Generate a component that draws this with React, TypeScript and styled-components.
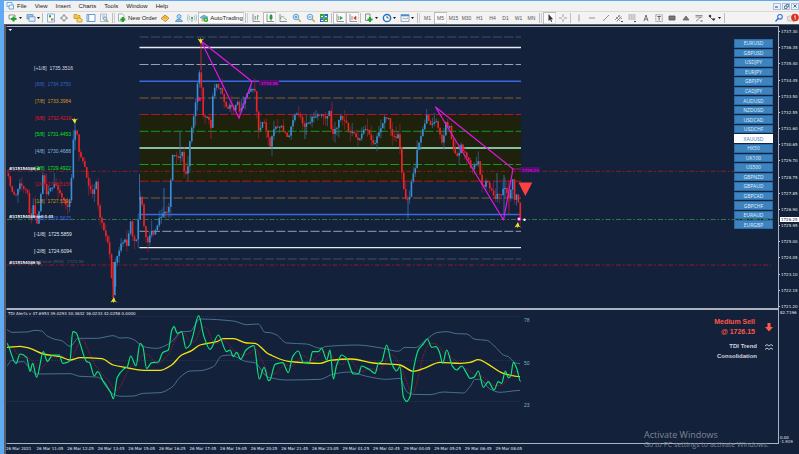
import React from "react";
import styled, { createGlobalStyle } from "styled-components";

const Global = createGlobalStyle`
  * { box-sizing: border-box; }
  html, body, #root { height: 100%; margin: 0; }
  body { background: #14213b; overflow: hidden; font-family: "Liberation Sans", Arial, sans-serif; }
  button { font: inherit; border: 0; margin: 0; padding: 0; background: none; color: inherit; cursor: pointer; }
`;

const TINY = `"DejaVu Sans", Tahoma, sans-serif`;

const Window = styled.div`
  display: flex;
  flex-direction: column;
  min-height: 100vh;
  border-left: 4px solid #5faaf2;
  border-top: 1px solid #5faaf2;
`;

const MenuBar = styled.nav`
  display: flex;
  align-items: center;
  height: 10px;
  padding: 0 0 0 2px;
  gap: 3px;
  background: #f1f1f1;
  color: #222;
  font-size: 6px;
  line-height: 10px;
`;

const MenuList = styled.div`
  display: flex;
  gap: 8px;
`;

const MenuItem = styled.button`
  line-height: 10px;
`;

const WindowControls = styled.div`
  display: flex;
  gap: 1px;
  margin-left: auto;
`;

const WindowButton = styled.button`
  display: flex;
  align-items: center;
  justify-content: center;
  width: 8px;
  height: 7px;
  border: 1px solid #a9c0dc;
  background: #eaf3fc;
`;

const Toolbar = styled.div`
  display: flex;
  align-items: center;
  height: 13px;
  padding: 0 0 0 2px;
  background: #f3f3f3;
  border-top: 1px solid #d9d9d9;
  color: #1c1c1c;
  font-size: 6px;
`;

const Tool = styled.button<{ $w?: number; $active?: boolean }>`
  display: flex;
  align-items: center;
  justify-content: center;
  gap: 1px;
  flex: none;
  width: ${(p) => p.$w ?? 13}px;
  height: 12px;
  white-space: nowrap;
  background: ${(p) => (p.$active ? "#fafafa" : "transparent")};
  box-shadow: ${(p) => (p.$active ? "inset 1px 1px 0 #bcbcbc, inset -1px -1px 0 #dedede" : "none")};
`;

const Period = styled(Tool)`
  font-size: 5px;
  color: #555;
`;

const Separator = styled.span<{ $grip?: boolean }>`
  flex: none;
  width: ${(p) => (p.$grip ? 3 : 1)}px;
  height: 10px;
  margin: 0 1px;
  border-left: 1px solid #bdbdbd;
  border-right: ${(p) => (p.$grip ? "1px solid #cfcfcf" : "0")};
`;

const ToolbarEnd = styled.div`
  display: flex;
  margin-left: auto;
`;

const Workspace = styled.main`
  flex: 1;
  display: flex;
  flex-direction: column;
  min-height: 0;
  padding-top: 1px;
  border-left: 2px solid #5b6068;
  border-top: 1px solid #5b6068;
  background: #14213b;
`;

const Panel = styled.section<{ $grow: number }>`
  position: relative;
  display: flex;
  flex: ${(p) => p.$grow} 1 0;
  min-height: 0;
`;

const Plot = styled.div`
  position: relative;
  flex: 1;
  min-width: 0;
  overflow: hidden;
  border: 1px solid #aab3bf;
  border-left-color: #14213b;
`;

const Canvas = styled.svg`
  position: absolute;
  inset: 0;
  display: block;
  width: 100%;
  height: 100%;
  text { font-family: ${TINY}; font-size: 4px; white-space: pre; }
  text.level { font-family: "Liberation Sans", Arial, sans-serif; font-size: 5px; }
`;

const Axis = styled.div`
  position: relative;
  display: flex;
  flex-direction: column;
  justify-content: space-between;
  flex: none;
  width: 20px;
  padding: 3px 0 0 2px;
  color: #e6ebf3;
  font: 4px/5px ${TINY};
`;

const Tick = styled.span`
  position: relative;
  white-space: nowrap;
  &::before {
    content: "";
    position: absolute;
    left: -2px;
    top: 2px;
    width: 1px;
    height: 1px;
    background: #c5ccd6;
  }
`;

const PriceTag = styled.span`
  position: absolute;
  left: 1px;
  top: 191px;
  width: 19px;
  padding-left: 1px;
  background: #fff;
  color: #14213b;
`;

const TimeAxis = styled.div`
  display: grid;
  grid-template-columns: repeat(17, 1fr);
  width: 520px;
  max-width: 100%;
  height: 10px;
  padding-top: 2px;
  color: #e6ebf3;
  font: 4px/5px ${TINY};
  white-space: nowrap;
`;

const PairList = styled.div`
  position: absolute;
  top: 12px;
  right: 5px;
  display: flex;
  flex-direction: column;
  gap: 1px;
  width: 39px;
  height: 190px;
`;

const Pair = styled.button<{ $selected: boolean }>`
  flex: 1;
  min-height: 0;
  border: 1px solid ${(p) => (p.$selected ? "#ffffff" : "#2d6ba5")};
  background: ${(p) => (p.$selected ? "#ffffff" : "#3d83bf")};
  color: ${(p) => (p.$selected ? "#3d83bf" : "#dbeaf7")};
  font: 5px/6px "Noto Sans", sans-serif;
`;

const Signals = styled.div`
  position: absolute;
  top: 7px;
  right: 4px;
  display: grid;
  grid-template-columns: auto 10px;
  align-items: center;
  column-gap: 7px;
  row-gap: 4px;
  font: bold 6px/10px "Liberation Sans", Arial, sans-serif;
`;

const Signal = styled.div<{ $sell?: boolean }>`
  text-align: right;
  padding-right: ${(p) => (p.$sell ? 2 : 0)}px;
  font-size: ${(p) => (p.$sell ? 7 : 6)}px;
  color: ${(p) => (p.$sell ? "#ff5548" : "#d0d5dc")};
`;

const Watermark = styled.div`
  position: absolute;
  right: 30px;
  bottom: -5px;
  width: 125px;
  color: #7c8694;
  font: 9px/11px "Open Sans", sans-serif;
  white-space: nowrap;
  pointer-events: none;
`;

const WatermarkLine = styled.div`
  font-size: 7px;
  line-height: 9px;
`;

const IndicatorAxis = styled(Axis)`
  padding: 1px 0 0 1px;
`;

const StackedTicks = styled.div`
  display: flex;
  flex-direction: column;
  line-height: 4px;
`;

type Pt = [number, number];

const closes: Pt[] = [
  [6,170],[10,184],[15,199],[19,184],[24,188],[28,192],[30,222],[33,205],[37,223],[40,205],[43,172],[46,195],[50,190],[54,182],[58,190],[62,200],[68,208],[71,190],[73,140],[75,131],[77,132],[79,150],[84,165],[88,182],[93,198],[96,178],[99,218],[103,225],[107,240],[110,257],[113,297],[115,262],[119,250],[124,238],[127,245],[131,220],[133,240],[137,242],[139,205],[141,192],[144,228],[147,245],[151,230],[154,238],[157,225],[161,215],[165,212],[168,215],[171,178],[173,151],[178,158],[182,152],[185,180],[188,167],[190,137],[195,107],[198,77],[200,67],[201,85],[203,115],[207,118],[211,126],[213,92],[217,83],[222,93],[227,108],[230,103],[235,110],[238,98],[240,113],[245,96],[252,85],[255,92],[259,137],[263,117],[267,135],[270,147],[274,128],[278,126],[283,128],[287,140],[292,125],[296,113],[300,115],[303,127],[308,125],[313,115],[318,116],[322,112],[327,118],[329,108],[332,135],[337,125],[341,117],[345,120],[350,133],[355,135],[357,142],[362,132],[367,130],[370,138],[375,143],[380,132],[385,117],[388,115],[391,132],[395,138],[399,135],[402,173],[404,193],[407,200],[409,198],[413,173],[415,170],[417,150],[420,137],[425,123],[427,115],[430,127],[435,120],[440,133],[443,148],[445,123],[450,128],[452,145],[457,157],[461,145],[467,158],[472,170],[478,162],[483,187],[487,180],[492,192],[495,200],[498,193],[502,198],[504,183],[508,200],[513,178],[515,203],[517,192],[520,219],
];

function at(points: Pt[], x: number): number {
  if (x <= points[0][0]) return points[0][1];
  for (let i = 1; i < points.length; i++) {
    const [x1, y1] = points[i];
    const [x0, y0] = points[i - 1];
    if (x <= x1) return y0 + ((y1 - y0) * (x - x0)) / (x1 - x0);
  }
  return points[points.length - 1][1];
}

const noise = (n: number) => {
  const v = Math.sin(n * 91.7 + 3.1) * 43758.5;
  return v - Math.floor(v);
};

const BAR = 1.91;
const candles = Array.from({ length: 270 }, (_, i) => {
  const x = 6.5 + i * BAR;
  const shake = (k: number) => (noise(k) - 0.5) * 5;
  const open = at(closes, x - BAR) + shake(i);
  const close = at(closes, x) + shake(i + 1);
  const top = Math.min(open, close);
  const bottom = Math.max(open, close);
  return {
    x,
    top,
    body: Math.max(1.2, bottom - top),
    high: top - noise(i + 500) ** 2 * 11,
    low: bottom + noise(i + 900) ** 2 * 10,
    up: close < open,
  };
});

const spikes: [number, number, number, string][] = [
  [201, 42, 70, "#e02a2a"], [332, 102, 132, "#b02038"], [180, 132, 155, "#3d78ad"], [139.5, 174, 200, "#3d78ad"],
  [408, 200, 218, "#3d78ad"], [497, 173, 196, "#3d78ad"], [504, 175, 214, "#3d78ad"], [75, 124, 150, "#3d78ad"],
  [509, 180, 214, "#b02038"], [211, 124, 139, "#b02038"], [305, 124, 139, "#3d78ad"], [164, 188, 218, "#3d78ad"],
];

const levels: { y: number; color: string; w: number; dashed?: boolean }[] = [
  { y: 37, color: "#414e5f", w: 1, dashed: true },
  { y: 47.5, color: "#e6ebf2", w: 1.3 },
  { y: 64.5, color: "#98a2b0", w: 1, dashed: true },
  { y: 81.2, color: "#3b68e0", w: 1.5 },
  { y: 98, color: "#846022", w: 1.2, dashed: true },
  { y: 114.5, color: "#b5122f", w: 1, dashed: true },
  { y: 131.3, color: "#159a1c", w: 1, dashed: true },
  { y: 148, color: "#84bda4", w: 1.8 },
  { y: 164.5, color: "#159a1c", w: 1, dashed: true },
  { y: 181.2, color: "#b01818", w: 1, dashed: true },
  { y: 198, color: "#846022", w: 1.2, dashed: true },
  { y: 214.5, color: "#3b68e0", w: 1.5 },
  { y: 231.3, color: "#98a2b0", w: 1, dashed: true },
  { y: 247.6, color: "#e6ebf2", w: 1.4 },
  { y: 259, color: "#414e5f", w: 1, dashed: true },
];

const levelLabels: [string, string, number, string][] = [
  ["[+1/8]", "1735.3516", 70, "#d5dae2"],
  ["[8/8]", "1734.3750", 86, "#3861c4"],
  ["[7/8]", "1733.3984", 103, "#d2951d"],
  ["[6/8]", "1732.4219", 120, "#e01427"],
  ["[5/8]", "1731.4453", 136, "#0be01b"],
  ["[4/8]", "1730.4688", 153, "#86b8dc"],
  ["[3/8]", "1729.4922", 170, "#0be01b"],
  ["[2/8]", "1728.5156", 186, "#c5182a"],
  ["[1/8]", "1727.5391", 203, "#d2951d"],
  ["[0/8]", "1726.5625", 220, "#3f66e0"],
  ["[-1/8]", "1725.5859", 236, "#e0e4ea"],
  ["[-2/8]", "1724.6094", 253, "#e0e4ea"],
];

const pairs = ["EURUSD","GBPUSD","USDJPY","EURJPY","GBPJPY","CADJPY","AUDUSD","NZDUSD","USDCAD","USDCHF","XAUUSD","HK50","UK100","US500","GBPNZD","GBPAUD","GBPCAD","GBPCHF","EURAUD","EURGBP"];
const prices = ["1737.30","1736.35","1735.40","1734.45","1733.50","1732.55","1731.60","1730.65","1729.70","1728.75","1727.85","1726.90","1725.95","1725.00","1724.05","1723.10","1722.15","1721.20"];
const times = ["26 Mar 2021","26 Mar 11:05","26 Mar 12:25","26 Mar 13:45","26 Mar 15:05","26 Mar 16:25","26 Mar 17:45","26 Mar 19:05","26 Mar 20:25","26 Mar 21:45","26 Mar 23:05","29 Mar 01:25","29 Mar 02:45","29 Mar 04:05","29 Mar 05:25","29 Mar 06:45","29 Mar 08:05"];

const third = (dx: number, pts: Pt[]): Pt[] => pts.map(([x, y]) => [dx + x / 3, 300 + y / 3]);
const upper = [
  ...third(0, [[18,88],[35,97],[80,96],[105,91],[125,93],[140,107],[165,118],[185,122],[210,139],[235,115],[290,115],[340,107],[360,114],[380,113],[400,118],[430,140],[470,145],[500,135],[520,120],[545,95],[570,94],[600,57],[700,63],[740,74],[775,72],[795,97]]),
  ...third(270, [[0,98],[20,105],[50,129],[110,132],[150,145],[170,139],[260,135],[340,145],[385,154],[405,142],[435,143],[470,118],[500,98],[530,95],[560,101],[590,102],[615,118],[650,121],[680,145],[700,165],[715,170],[735,188],[750,191]]),
];
const lower = [
  ...third(0, [[18,200],[35,181],[50,186],[70,185],[85,200],[110,222],[210,221],[240,229],[290,231],[310,242],[340,283],[365,289],[400,288],[430,280],[480,278],[515,262],[540,232],[570,213],[600,212],[640,200],[665,168],[690,165],[740,185],[765,188],[795,225]]),
  ...third(270, [[0,233],[50,240],[150,238],[190,222],[240,216],[290,229],[350,238],[390,235],[410,275],[430,283],[480,284],[520,276],[580,279],[600,260],[615,238],[630,238],[660,267],[690,277],[720,274],[750,271]]),
];
const middle = [
  ...third(0, [[18,142],[60,139],[90,145],[130,162],[180,170],[210,180],[240,173],[305,176],[340,195],[380,203],[430,211],[480,211],[515,195],[545,165],[575,152],[600,135],[650,125],[670,116],[700,116],[740,129],[765,130],[800,158]]),
  ...third(270, [[0,164],[55,184],[150,190],[180,181],[245,177],[310,189],[390,195],[430,214],[460,206],[510,187],[570,190],[600,187],[625,179],[650,190],[700,220],[750,230]]),
];
const rsi = [
  ...third(0, [[18,128],[48,191],[60,162],[80,172],[90,214],[98,190],[110,232],[130,155],[142,184],[158,165],[178,165],[188,190],[200,188],[210,182],[218,95],[228,98],[240,130],[260,185],[268,187],[283,228],[293,215],[310,245],[333,280],[340,296],[352,232],[370,208],[382,200],[392,168],[408,198],[420,130],[428,138],[440,206],[455,188],[475,186],[488,158],[505,150],[515,92],[522,80],[532,100],[545,95],[558,145],[570,135],[578,110],[596,47],[612,110],[630,148],[655,105],[680,155],[690,150],[700,170],[710,157],[722,178],[738,150],[762,137],[778,237],[792,202],[806,242]]),
  ...third(270, [[0,240],[15,193],[38,188],[55,218],[68,170],[85,153],[100,187],[118,187],[128,155],[145,155],[155,145],[170,180],[180,150],[190,237],[200,195],[215,165],[230,175],[250,222],[265,222],[275,198],[287,203],[300,210],[315,220],[325,190],[335,185],[350,135],[365,190],[380,213],[390,200],[400,290],[410,304],[420,290],[432,200],[445,150],[460,132],[472,117],[485,142],[498,140],[508,155],[518,190],[530,150],[548,200],[560,210],[575,198],[590,220],[600,235],[612,232],[625,213],[640,262],[655,245],[672,270],[685,245],[695,250],[706,213],[715,233],[722,228],[730,187],[740,205],[752,245]]),
];
const signal: Pt[] = Array.from({ length: 254 }, (_, i) => {
  const x = 12 + i * 2;
  let sum = 0;
  for (let k = 0; k < 12; k++) sum += at(rsi, x - k);
  return [x, sum / 12];
});

// Smooth curve with horizontal-friendly control points, so peaks never overshoot.
const curve = (pts: Pt[]) => {
  const slope = (i: number) => {
    if (i <= 0 || i >= pts.length - 1) return 0;
    const a = (pts[i][1] - pts[i - 1][1]) / (pts[i][0] - pts[i - 1][0]);
    const b = (pts[i + 1][1] - pts[i][1]) / (pts[i + 1][0] - pts[i][0]);
    return a * b <= 0 ? 0 : (2 * a * b) / (a + b);
  };
  return pts.reduce((d, [x, y], i) => {
    if (i === 0) return `M${x} ${y}`;
    const [px, py] = pts[i - 1];
    const h = (x - px) / 3;
    return `${d}C${px + h} ${py + slope(i - 1) * h} ${x - h} ${y - slope(i) * h} ${x} ${y}`;
  }, "");
};

const Icon = ({ children, w = 10 }: { children: React.ReactNode; w?: number }) => (
  <svg width={w} height="10" viewBox={`0 0 ${w} 10`} fill="none" stroke="#777" strokeWidth="0.8" aria-hidden="true">{children}</svg>
);
const Caret = () => (
  <svg width="3" height="2" viewBox="0 0 3 2" aria-hidden="true"><path d="M0 0h3L1.5 2z" fill="#111" /></svg>
);

const icons: Record<string, React.ReactNode> = {
  newChart: <><path d="M1 2h6v4H1z" fill="#fff" /><path d="M5.5 3.5v5M3 6h5.5" stroke="#1ba32a" strokeWidth="2.2" /></>,
  profiles: <><path d="M1 1.5h6v4.5H1z" fill="#9cc4ea" stroke="#6a93bb" /><path d="M3 3.8h6v4.5H3z" fill="#e2eefa" stroke="#6a93bb" /></>,
  market: <><path d="M1.5 1h7v8h-7z" fill="#f5f9fd" stroke="#6aa2d8" /><path d="M3 3.2h2" stroke="#1ba32a" strokeWidth="2" /><path d="M5 6.5h2.5" stroke="#e8672a" strokeWidth="2" /></>,
  navigator: <><circle cx="5" cy="5" r="2.4" stroke="#888" /><path d="M5 1v2.4M5 6.6V9M1 5h2.4M6.6 5H9" stroke="#777" /></>,
  folder: <><path d="M1 1.5h3l1 1h2v3H1z" fill="#f3c645" stroke="#c4952a" /><path d="M4 5h3l1 1h1v3H4z" fill="#f7d873" stroke="#c4952a" /></>,
  terminal: <><path d="M1 1.5h8v7H1z" fill="#fff" stroke="#4383c4" /><path d="M2.5 2v6" stroke="#7fb1e3" strokeWidth="1.6" /></>,
  tester: <><path d="M1.5 1h6v7.5h-6z" fill="#f4f8fb" stroke="#9bacbc" /><path d="M3 3h3M3 5h2" stroke="#6fa3cc" /><circle cx="6.2" cy="5.7" r="1.7" fill="#cfe5f7" stroke="#6d8ba6" /><path d="m7.4 7 1.8 2" stroke="#c69c38" strokeWidth="1.2" /></>,
  order: <><path d="M1.5 1h4l1.5 1.5V8H1.5z" fill="#fff" stroke="#8c9aa6" /><path d="M5.8 4v5M3.3 6.5h5" stroke="#1ba32a" strokeWidth="2.2" /></>,
  gold: <><path d="m5 2 4 3.2L5.5 8.5 1 5.5z" fill="#f0b23a" stroke="#b97a16" /><path d="m2 5.4 3.2 2 3-2.4" stroke="#fbe3a2" /></>,
  person: <><circle cx="5" cy="3.5" r="2" fill="#b4d7f2" stroke="#4b92cb" /><path d="M1.5 8.5c.5-3 6.5-3 7 0z" fill="#84bce7" stroke="#4b92cb" /></>,
  radio: <><circle cx="5" cy="5" r="1.2" fill="#5ea970" stroke="none" /><path d="M3 2.8a3 3 0 0 0 0 4.4M7 2.8a3 3 0 0 1 0 4.4M1.6 1.5a5 5 0 0 0 0 7M8.4 1.5a5 5 0 0 1 0 7" stroke="#8cb3bd" /><path d="M5 6v3" stroke="#57a06b" /></>,
  auto: <><path d="M1 4.5 5 2l4 2.2-4 2z" fill="#6eb1e0" stroke="#4486b5" strokeWidth=".5" /><path d="M2 6h4v2.5H3z" fill="#e9bb48" stroke="none" /><circle cx="7" cy="6.7" r="2.2" fill="#25a738" stroke="none" /><path d="m6.3 5.6 1.8 1.1-1.8 1.1z" fill="#fff" stroke="none" /></>,
  bars: <path d="M2 1v7.5h7M4.2 3v4M6.6 2v5M4.2 4h1M6.6 3h1" stroke="#6f7f76" />,
  candle: <><path d="M2 1v7.5h7M6 1v7" stroke="#63786b" /><path d="M5 2.5h2v3.5H5z" fill="#26b13a" stroke="#1a8a2a" /></>,
  lineChart: <><path d="M2 1v7.5h7" stroke="#777" /><path d="M2.5 6c1-5 3-2 6 1" stroke="#55a066" /></>,
  zoomIn: <><circle cx="4" cy="4" r="2.8" fill="#dff0fc" stroke="#3e8dca" /><path d="M2.6 4h2.8M4 2.6v2.8" stroke="#2678bb" /><path d="m6.2 6.2 2.6 2.6" stroke="#d0a233" strokeWidth="1.5" /></>,
  zoomOut: <><circle cx="4" cy="4" r="2.8" fill="#dff0fc" stroke="#3e8dca" /><path d="M2.6 4h2.8" stroke="#2678bb" /><path d="m6.2 6.2 2.6 2.6" stroke="#d0a233" strokeWidth="1.5" /></>,
  tile: <g stroke="none"><path d="M1 1h4v4H1zM5 5h4v4H5z" fill="#31a63a" /><path d="M5.3 1H9v3.7H5.3zM1 5.3h3.7V9H1z" fill="#2c64bd" /><path d="M2 3h2v1H2zM6 3h2v1H6zM2 7h2v1H2zM6 7h2v1H6z" fill="#fff" /></g>,
  scroll: <><path d="M2 1v7.5h7M3.8 3v4" stroke="#777" /><path d="m5 3 3 2-3 2z" fill="#26a63a" stroke="none" /></>,
  shift: <><path d="M2 1v7.5h7M4 3v4" stroke="#777" /><path d="M8 3 5.5 5 8 7zM8 5h1.5" fill="#d53b2b" stroke="#d53b2b" strokeWidth=".4" /></>,
  indicators: <><path d="M1.5 1H6v6.5H1.5z" fill="#f2f2f2" stroke="#777" /><path d="M6 4v5M3.5 6.5h5" stroke="#1ba32a" strokeWidth="2" /></>,
  clock: <><circle cx="5" cy="5" r="3.6" fill="#fff" stroke="#2372c4" strokeWidth="1.5" /><path d="M5 3v2h1.7" stroke="#333" /></>,
  template: <><path d="M1 1.5h8v7H1z" fill="#f5faff" stroke="#6a9cca" /><path d="M1 2.5h8" stroke="#4b8bc8" strokeWidth="1.6" /><path d="m2.5 6 1.5-1 1.5 1L8 5" stroke="#cc7a5a" /></>,
  cursor: <path d="M3.5 1v7l1.6-1.5L6.3 9l.9-.5L6.1 6.2h2z" fill="#333" stroke="none" />,
  cross: <path d="M5 1v3M5 6v3M1 5h3M6 5h3" stroke="#888" />,
  vline: <path d="M5 1.5v7" stroke="#888" />,
  hline: <path d="M2 5h6" stroke="#777" />,
  trend: <path d="m2 8 6-6" stroke="#777" />,
  channel: <><path d="m1 7 5-5M2.5 8.5l5-5M2 4l4 4M4 2.5 8 6" /><path d="M7 8.5h2" stroke="#222" /></>,
  fibo: <><path d="M1.5 2h7M1.5 4h7M1.5 6h7" strokeDasharray="1.5 .4" /><path d="M7 8.5h2" stroke="#222" /></>,
  text: <path d="M3 8.2 5 2l2 6.2M3.7 6.2h2.6" stroke="#555" />,
  label: <><path d="M1.8 1.8h6.5v6.7H1.8z" strokeDasharray="1 .6" /><path d="M3.4 3.5h3.4M5.1 3.5v4" stroke="#444" /></>,
  rect: <path d="M2 3h6v4H2z" fill="#777" stroke="#555" />,
  tri: <path d="M2 7h6L5 3z" fill="#777" stroke="#666" />,
  andrews: <><path d="M1.5 2.5h7M1.5 4h7M2 8l5-4" /><path d="M6.5 8h2" stroke="#222" /></>,
  arrows: <><path d="M1.5 3 3 1.5 4.5 3 3 4.5zM5 5.5h3.5L6.7 8z" fill="#222" stroke="none" /><path d="m3 4 3 3" stroke="#444" /></>,
  search: <><circle cx="6" cy="3.8" r="2.3" stroke="#3972d2" strokeWidth="1.1" /><path d="M4.2 5.5 1.5 8.5" stroke="#3972d2" strokeWidth="1.4" /></>,
};

const Btn = ({ icon, label, w, active, caret, children }: { icon: string; label: string; w?: number; active?: boolean; caret?: boolean; children?: React.ReactNode }) => (
  <Tool $w={w} $active={active} aria-label={label} title={label}>
    <Icon>{icons[icon]}</Icon>
    {children}
    {caret && <Caret />}
  </Tool>
);

const Arrow = ({ x, y, down }: { x: number; y: number; down?: boolean }) => (
  <path transform={`translate(${x} ${y}) scale(1 ${down ? -1 : 1})`} d="M0-3 1.4 1 3.6 2.6.4 1.6-.3 3.2-.9 1.5-3.4 2.6z" fill="#f2e52b" />
);

const PriceChart = () => (
  <Canvas role="img" aria-label="XAUUSD M5 price chart">
    <g transform="translate(-7 -27)">
      <path d="M8.5 29h3.5l-1.7 2z" fill="#fff" />
      <rect x="140" y="114.5" width="381" height="66.7" fill="#1e220d" />
      {levels.map((l) => (
        <line key={l.y} x1="139.5" x2="521" y1={l.y} y2={l.y} stroke={l.color} strokeWidth={l.w} strokeDasharray={l.dashed ? "9 2.4" : undefined} />
      ))}
      <g strokeWidth=".9" strokeDasharray="5 2 1.5 2">
        <line x1="7" x2="100%" y1="171.3" y2="171.3" stroke="#9c1a24" />
        <line x1="7" x2="100%" y1="219.5" y2="219.5" stroke="#2c8446" />
        <line x1="7" x2="100%" y1="265" y2="265" stroke="#9c1a24" />
      </g>
      {spikes.map(([x, y1, y2, c]) => <line key={x} x1={x} x2={x} y1={y1} y2={y2} stroke={c} strokeWidth=".8" />)}
      {candles.map((c) => (
        <g key={c.x}>
          <line x1={c.x} x2={c.x} y1={c.high} y2={c.low} stroke={c.up ? "#356c9f" : "#9a2136"} strokeWidth=".7" />
          <rect x={c.x - 0.8} y={c.top} width="1.6" height={c.body} fill={c.up ? "#3b8fd4" : "#f42222"} />
        </g>
      ))}
      <rect x="112.5" y="262" width="1.5" height="36" fill="#d02a30" />
      <rect x="114" y="262" width="1.5" height="33" fill="#3b8fd4" />
      {levelLabels.map(([k, v, y, c]) => <text className="level" key={k} x={k.length > 5 ? 34 : 35} y={y} fill={c}>{`${k}  ${v}`}</text>)}
      <text x="39" y="262.5" fill="#4b5767">Frame (M48)  1723.98</text>
      <g fill="#f3f5f8" stroke="#f3f5f8" strokeWidth=".15">
        <text x="9" y="170">#315154086 sl</text>
        <text x="9" y="218">#315154086 sell 0.01</text>
        <text x="9" y="264">#315154086 tp</text>
      </g>
      <g fill="none" stroke="#e416e4" strokeWidth="1.2" strokeLinejoin="round">
        <path d="M201 41 239 118 252 81.5zM435.5 107 513 169l-9.5 51z" />
        <path d="M252 81.5h8M513 169h8" strokeWidth=".6" />
      </g>
      <g fill="#530e6b">
        <rect x="259" y="80" width="20" height="5.5" />
        <rect x="520" y="167" width="20" height="5.5" />
      </g>
      <g fill="#e01ae0">
        <text x="261" y="84.5">1734.38</text>
        <text x="522" y="171.5">1729.23</text>
      </g>
      <path d="m199 96 .7 2.1 2.3-.3-1.6 1.5 1 2-2-.8-1.9 1.1.6-2.2-1.8-1.3 2.2-.1z" fill="#f01882" />
      <path d="M518.5 182.5h13.8l-7 13.5z" fill="#ff4040" />
      <Arrow x={75} y={121} down />
      <Arrow x={201} y={41} down />
      <Arrow x={114} y={300} />
      <Arrow x={518} y={225} />
      <circle cx="519" cy="219" r="1.5" fill="#fff" stroke="#f01ad0" />
      <circle cx="524.5" cy="219.7" r="1.2" fill="#fff" />
    </g>
  </Canvas>
);

const TdiChart = () => (
  <Canvas role="img" aria-label="TDI indicator chart">
    <g transform="translate(-7 -310)" fill="none" strokeLinejoin="round">
      <path d="M7 316.5H521M7 360.5H521M7 401.5H521" stroke="#324157" strokeWidth=".6" strokeDasharray="1 1" />
      <path d={curve(upper)} stroke="#4e7897" strokeWidth=".9" />
      <path d={curve(lower)} stroke="#4e7897" strokeWidth=".9" />
      <path d={curve(signal)} stroke="#c3192c" strokeWidth=".7" strokeDasharray="1.5 1" />
      <path d={curve(middle)} stroke="#f4e60c" strokeWidth="1.3" />
      <path d={curve(rsi)} stroke="#0ee07c" strokeWidth="1.2" />
      <text x="8" y="315" fill="#e6ebf3">TDI Alerts v 47.6953 39.0293 30.3632 36.0233 42.0258 0.0000</text>
      <g fill="#77b5b5">
        <text className="level" x="524" y="322">78</text>
        <text className="level" x="524" y="365">50</text>
        <text className="level" x="524" y="407">23</text>
      </g>
    </g>
  </Canvas>
);

export default function App() {
  return (
    <Window>
      <Global />
      <MenuBar aria-label="Main menu">
        <Icon w={8}><path d="M1 1.5h5v4H1z" fill="#fff" stroke="#5c97d3" /><path d="M3 4h4.5v4H3z" fill="#e9f3fd" stroke="#5c97d3" /></Icon>
        <MenuList>
          {["File", "View", "Insert", "Charts", "Tools", "Window", "Help"].map((m) => <MenuItem key={m}>{m}</MenuItem>)}
        </MenuList>
        <WindowControls>
          <WindowButton aria-label="Minimize"><svg width="4" height="4"><path d="M0 3h3" stroke="#345" /></svg></WindowButton>
          <WindowButton aria-label="Restore"><svg width="5" height="5" fill="none" stroke="#457" strokeWidth=".7"><path d="M.5 2h2.500v2.500H.5zM2 2V.5h2.500V3H3" /></svg></WindowButton>
          <WindowButton aria-label="Close"><svg width="4" height="4"><path d="m.5.5 3 3m0-3-3 3" stroke="#345" strokeWidth=".8" /></svg></WindowButton>
        </WindowControls>
      </MenuBar>
      <Toolbar role="toolbar">
        <Btn icon="newChart" label="New chart" w={18} caret />
        <Btn icon="profiles" label="Profiles" w={17} caret />
        <Separator />
        <Btn icon="market" label="Market watch" />
        <Btn icon="navigator" label="Data window" w={14} />
        <Btn icon="folder" label="Navigator" />
        <Btn icon="terminal" label="Terminal" />
        <Btn icon="tester" label="Strategy tester" w={14} />
        <Separator $grip />
        <Btn icon="order" label="New Order" w={42}>New Order</Btn>
        <Btn icon="gold" label="MetaEditor" w={14} />
        <Btn icon="person" label="Community" />
        <Btn icon="radio" label="Signals" />
        <Btn icon="auto" label="AutoTrading" w={46} active>AutoTrading</Btn>
        <Separator $grip />
        <Btn icon="bars" label="Bar chart" w={14} />
        <Btn icon="candle" label="Candlesticks" active />
        <Btn icon="lineChart" label="Line chart" w={14} />
        <Btn icon="zoomIn" label="Zoom in" w={14} />
        <Btn icon="zoomOut" label="Zoom out" />
        <Btn icon="tile" label="Tile windows" />
        <Separator />
        <Btn icon="scroll" label="Auto scroll" active />
        <Btn icon="shift" label="Chart shift" active />
        <Separator />
        <Btn icon="indicators" label="Indicators" w={18} caret />
        <Btn icon="clock" label="Periods" w={18} caret />
        <Btn icon="template" label="Templates" w={18} caret />
        <Separator $grip />
        {["M1", "M5", "M15", "M30", "H1", "H4", "D1", "W1", "MN"].map((p) => <Period key={p} $active={p === "M5"}>{p}</Period>)}
        <Separator $grip />
        <Btn icon="cursor" label="Cursor" active />
        <Btn icon="cross" label="Crosshair" />
        <Separator />
        <Btn icon="vline" label="Vertical line" />
        <Btn icon="hline" label="Horizontal line" w={14} />
        <Btn icon="trend" label="Trendline" />
        <Btn icon="channel" label="Channel" />
        <Btn icon="fibo" label="Fibonacci" w={14} />
        <Btn icon="text" label="Text" />
        <Btn icon="label" label="Text label" />
        <Btn icon="rect" label="Rectangle" w={14} />
        <Btn icon="tri" label="Triangle" />
        <Btn icon="andrews" label="Pitchfork" />
        <Btn icon="arrows" label="Arrows" w={18} caret />
        <Separator />
        <ToolbarEnd>
          <Btn icon="search" label="Search" w={12} />
          <Tool $w={14} aria-label="Notifications, 1 new">
            <svg width="13" height="11" viewBox="0 0 13 11" aria-hidden="true">
              <path d="M1 4c3-2 6-1 7 1v4L6 8H2z" fill="#e4e4e4" stroke="#aaa" strokeWidth=".6" />
              <circle cx="9" cy="4.5" r="3.8" fill="#df2e1b" />
              <path d="m8 3.6 1.2-1v4" fill="none" stroke="#fff" strokeWidth=".8" />
            </svg>
          </Tool>
        </ToolbarEnd>
      </Toolbar>
      <Workspace>
        <Panel $grow={283}>
          <Plot>
            <PriceChart />
            <PairList>
              {pairs.map((p) => <Pair key={p} $selected={p === "XAUUSD"}>{p}</Pair>)}
            </PairList>
          </Plot>
          <Axis>
            {prices.map((p) => <Tick key={p}>{p}</Tick>)}
            <PriceTag>1726.25</PriceTag>
          </Axis>
        </Panel>
        <Panel $grow={135}>
          <Plot>
            <TdiChart />
            <Signals>
              <Signal $sell>Medium Sell<br />@ 1726.15</Signal>
              <svg width="10" height="11" viewBox="0 0 10 11" aria-label="Down"><path d="M3.5 1h3v4h2.5L5 9.5 1 5h2.5z" fill="#ff5a45" /></svg>
              <Signal>TDI Trend<br />Consolidation</Signal>
              <svg width="10" height="18" viewBox="0 0 10 18" fill="none" stroke="#d0d5dc" aria-label="Sideways"><path d="m1 4 2-1.5L5 4l2-1.5L9 4M1 7.5 3 6l2 1.5L7 6l2 1.5" strokeWidth=".9" /></svg>
            </Signals>
          </Plot>
          <IndicatorAxis>
            <span>82.7196</span>
            <StackedTicks><span>0.00</span><span>-1.919</span></StackedTicks>
          </IndicatorAxis>
          <Watermark>
            Activate Windows
            <WatermarkLine>Go to PC settings to activate Windows.</WatermarkLine>
          </Watermark>
        </Panel>
        <TimeAxis>
          {times.map((t) => <span key={t}>{t}</span>)}
        </TimeAxis>
      </Workspace>
    </Window>
  );
}
